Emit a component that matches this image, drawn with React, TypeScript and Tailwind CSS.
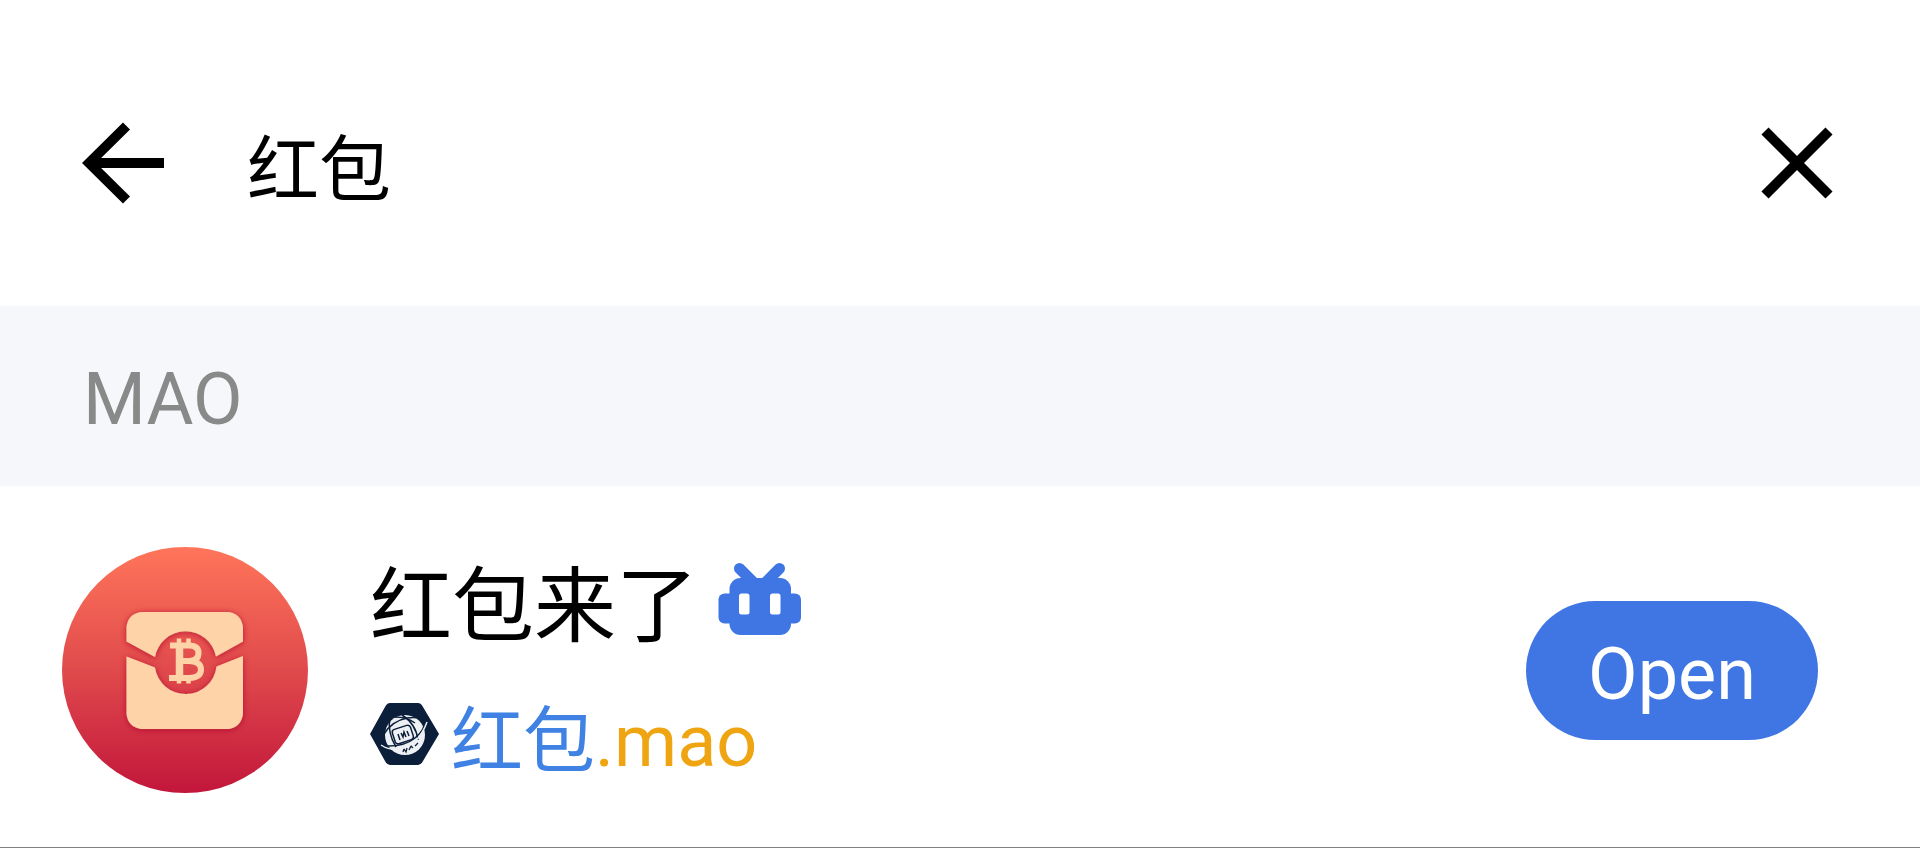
import { useState } from "react";

function BackIcon() {
  return (
    <svg width="82" height="82" viewBox="0 0 82 82" fill="none" stroke="#000" strokeWidth="10" aria-hidden="true">
      <path d="M82 41H10M44.500 4L7 41l37.500 37" />
    </svg>
  );
}

function CloseIcon() {
  return (
    <svg width="72" height="72" viewBox="0 0 72 72" fill="none" stroke="#000" strokeWidth="10" aria-hidden="true">
      <path d="M4 4l64 64M68 4L4 68" />
    </svg>
  );
}

function EnvelopeAvatar() {
  return (
    <svg className="shrink-0" width="246" height="246" viewBox="0 0 246 246" aria-hidden="true">
      <defs>
        <linearGradient id="disc" x1="0" y1="0" x2="0" y2="1">
          <stop offset="0" stopColor="#ff755a" />
          <stop offset="0.5" stopColor="#e04a4c" />
          <stop offset="1" stopColor="#c2163b" />
        </linearGradient>
        <filter id="lift" x="-20%" y="-20%" width="140%" height="140%">
          <feDropShadow dx="0" dy="1" stdDeviation="3" floodColor="#b01030" floodOpacity="0.8" />
        </filter>
      </defs>
      <circle cx="123" cy="123" r="123" fill="url(#disc)" />
      <g fill="#ffd3a8" filter="url(#lift)">
        <path d="M64.500 94.500V80Q66 67 79 65H167Q179 67 181 80V94.500L154 109.500A31 31 0 0 0 93 110Z" />
        <path d="M64.500 109.500L93 120.500A31 31 0 0 0 154.500 119.500L181 109V167Q179 180 167 182H79Q66 180 64.500 167Z" />
      </g>
      <g fill="none" stroke="#ffd3a8" strokeWidth="6">
        <path d="M108 98.500H127Q136.500 98.500 136.500 106T127.500 114H118M127 114Q139 114.500 139 122.500T127.500 131H107" />
        <path d="M117.500 97V132" strokeWidth="7.500" />
        <path d="M117 91.500v7M126.500 91.500v7M117 130.500v6M126.500 130.500v6" strokeWidth="4.500" />
      </g>
    </svg>
  );
}

function RobotIcon() {
  return (
    <svg className="shrink-0" width="84" height="72" viewBox="0 0 84 72" aria-hidden="true">
      <g fill="#3f76e4">
        <rect x="11.500" y="15" width="61.500" height="57" rx="11" />
        <rect x="0.500" y="30.500" width="82.500" height="30" rx="6" />
        <path d="M21.500 5.500L36 20M61.500 5.500L47 20" stroke="#3f76e4" strokeWidth="11" strokeLinecap="round" />
      </g>
      <rect x="21" y="30.500" width="10.500" height="21" rx="2.500" fill="#fff" />
      <rect x="52" y="30.500" width="10.500" height="21" rx="2.500" fill="#fff" />
    </svg>
  );
}

function ChainBadge() {
  return (
    <svg className="shrink-0" width="69" height="62" viewBox="0 0 69 62" aria-hidden="true">
      <path d="M0 31L15 4Q17 0 20 0H48Q51 0 53 4L69 31L53 58Q51 62 48 62H20Q17 62 15 58Z" fill="#0b1e3a" />
      <circle cx="35" cy="32" r="20" fill="#eef1f4" />
      <g fill="none" stroke="#0b1e3a" strokeWidth="1.500">
        <path d="M14 31Q22 18 37 15Q51 13 53 19M15 43Q34 44 45 35T54 18" />
        <path d="M20 15Q17 29 26 44M32 12Q46 21 48 37M25 14Q37 14 45 20" />
        <rect x="23.500" y="24" width="19" height="15" rx="3" transform="rotate(-18 33 32)" />
        <path d="M28 31l2 6M31 30l2 4 1-5 2 5M37 28l2 5" strokeWidth="1.500" />
        <path d="M33 49l1-3 2 3 1-4M39 47l2-4 2 2M45 43l3-3" strokeWidth="1.300" />
      </g>
      <path d="M11 42Q20 48 31 46Q49 41 57 19" fill="none" stroke="#eef1f4" strokeWidth="1.500" />
    </svg>
  );
}

export default function App() {
  const [query, setQuery] = useState("红包");

  return (
    <div className="w-full border-b border-[#808080] bg-white font-['Roboto','Noto_Sans_CJK_SC',sans-serif] text-black">
      <header className="flex items-center pt-[110px] pr-[87px] pb-[90px] pl-[82px]">
        <button type="button" aria-label="Back" className="shrink-0">
          <BackIcon />
        </button>
        <input
          type="text"
          aria-label="Search"
          value={query}
          onChange={(event) => setQuery(event.target.value)}
          className="ml-[83px] h-[106px] min-w-0 flex-1 bg-transparent text-[72px] leading-[92px] outline-none"
        />
        <button type="button" aria-label="Clear" onClick={() => setQuery("")} className="shrink-0">
          <CloseIcon />
        </button>
      </header>

      <h2 className="bg-[#f5f7fb] px-[83px] pt-11 pb-9 text-[72px] leading-[100px] text-[#888a89]">MAO</h2>

      <main className="flex items-center pt-[61px] pr-[102px] pb-[54px] pl-[62px]">
        <EnvelopeAvatar />
        <div className="ml-[62px] min-w-0 flex-1">
          <div className="flex items-start gap-5">
            <h3 className="text-[82px] leading-[120px]">红包来了</h3>
            <div className="pt-4">
              <RobotIcon />
            </div>
          </div>
          <div className="mt-4 flex items-start gap-3">
            <div className="pt-5">
              <ChainBadge />
            </div>
            <p className="pt-2 text-[72px] leading-[102px] text-[#3f82e4]">
              红包<span className="text-[#efa512]">.mao</span>
            </p>
          </div>
        </div>
        <button
          type="button"
          className="shrink-0 rounded-full bg-[#3f76e4] px-[62px] pt-6 pb-[15px] text-[72px] leading-[100px] text-white"
        >
          Open
        </button>
      </main>
    </div>
  );
}
